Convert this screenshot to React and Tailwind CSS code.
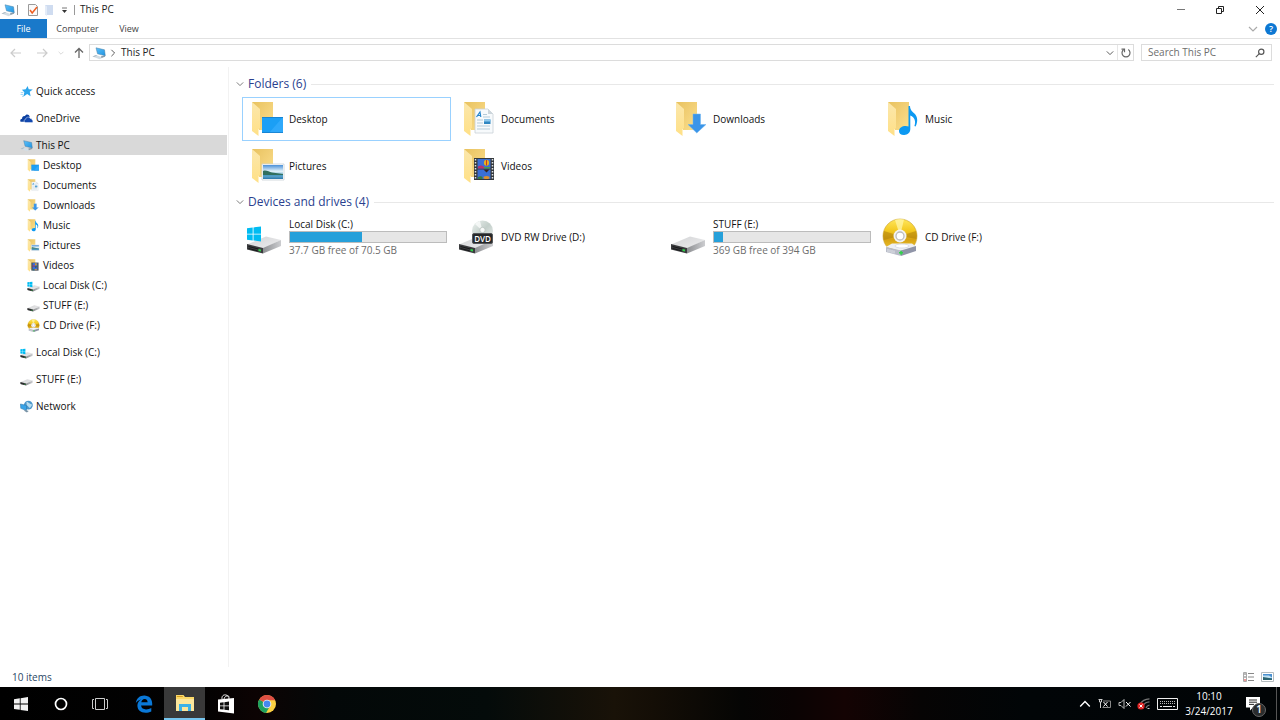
import { useId, useState } from 'react';

function PcIcon({ className }) {
  const id = useId();
  return (
    <svg viewBox="0 0 14 14" className={className} aria-hidden="true">
      <defs>
        <linearGradient id={id} x1="0" y1="0" x2="1" y2="1">
          <stop offset="0" stopColor="#5cc0fa" />
          <stop offset="1" stopColor="#1f93e0" />
        </linearGradient>
      </defs>
      <path d="M.5 10.5 4 9l7 2.6-3.400 1.700z" fill="#d3dde4" />
      <path d="M.5 10.500 4 9l1.200.5-3 1.500z" fill="#aebcc6" />
      <path d="M9 10.200 13 9.500v1.300L9.500 12z" fill="#8c9ca8" />
      <path d="M4 1.800 12.500 3.800l.8 6L5.500 7.800z" fill={`url(#${id})`} stroke="#4c7fa3" strokeWidth=".5" />
    </svg>
  );
}

function StarIcon({ className }) {
  return (
    <svg viewBox="0 0 14 14" className={className} aria-hidden="true">
      <path d="m8.200 1 1.200 3.700 4.400.1-3.300 2.600.9 4.800-3.700-2.500-4.200 2.900 1.200-4.700-2.700-2.900 4.100-.3z" fill="#2ba5ec" />
      <path d="M.8 8.200h2.800M.6 10.200h2.600M2.200 12.200h1.200" stroke="#7fc9f3" strokeWidth=".8" />
    </svg>
  );
}

function OneDriveIcon({ className }) {
  return (
    <svg viewBox="0 0 14 14" className={className} aria-hidden="true">
      <path d="M.3 9.600C.1 8.200 1.200 7.400 2.200 7.300c0-2.200 1.600-3.200 3-2.800C6.500 2 9.800 2.300 10.400 5.200L5.200 10.600H2C1 10.600.4 10.200.3 9.600z" fill="#0a3fa0" />
      <path d="M4.400 9.800c0-1.300.7-1.900 1.700-2 .1-2.300 3.700-3.400 4.900-.9 1.300-.2 1.900.6 1.900 1.500 1.500.3 1.400 3-.3 3H6c-1 0-1.600-.7-1.600-1.600z" fill="#1249b0" stroke="#fff" strokeWidth=".5" />
    </svg>
  );
}

function NetworkIcon({ className }) {
  return (
    <svg viewBox="0 0 14 14" className={className} aria-hidden="true">
      <circle cx="9" cy="5.500" r="4.800" fill="#4b97cc" />
      <path d="M7 1.800c2 .2 2 1.600 3.200 1.800.6 1 2 .6 2.800 1.400-.4 2-1.600 2-2.200 3.600C9 8.600 9.500 6.600 7.200 6z" fill="#b7dcef" />
      <path d="M.5 4.300 7 5.800v5.600L.8 9z" fill="#38a3e8" stroke="#2b75a8" strokeWidth=".6" />
      <path d="m4 11.200 2-.5 3.400 1.200-2 1.500z" fill="#7892a5" />
    </svg>
  );
}

// the open yellow folder every library icon sits on, plus its emblem
function FolderIcon({ kind, className }) {
  const id = useId();
  return (
    <svg viewBox="0 0 34 36" className={className} aria-hidden="true">
      <defs>
        <linearGradient id={`${id}b`} x1="0" y1="0" x2="1" y2="1">
          <stop offset="0" stopColor="#e8c25f" />
          <stop offset=".5" stopColor="#f2d077" />
          <stop offset="1" stopColor="#fae08d" />
        </linearGradient>
        <linearGradient id={`${id}f`} x1="0" y1="0" x2="0" y2="1">
          <stop offset="0" stopColor="#fbe7ac" />
          <stop offset="1" stopColor="#ffe086" />
        </linearGradient>
        <linearGradient id={`${id}s`} x1="0" y1="0" x2="0" y2="1">
          <stop offset="0" stopColor="#4a90d8" />
          <stop offset=".45" stopColor="#e4f3fa" />
          <stop offset=".65" stopColor="#8fc4de" />
          <stop offset="1" stopColor="#2878ac" />
        </linearGradient>
      </defs>
      <path d="M1 1h21v28H8z" fill={`url(#${id}b)`} />
      <path d="M1 1l8 7v19l-1.500 1v7L1 30z" fill={`url(#${id}f)`} />
      {kind === 'desktop' && (
        <g>
          <path d="M11 16h21v16H11z" fill="#1b9ff5" />
          <path d="M32 16v16H18z" fill="#2fa9fb" />
          <path d="M11 16.500h21M11 31.500h21" stroke="#1279c4" strokeWidth=".7" />
        </g>
      )}
      {kind === 'documents' && (
        <g>
          <path d="M12 8h13l5 5v19H12z" fill="#f7fafc" stroke="#c9d1d7" strokeWidth=".8" />
          <path d="M25 8v5h5z" fill="#cdd6dc" />
          <path d="m13.500 16 3.500-5 .8 5M15 14.500h3" fill="none" stroke="#2586ce" strokeWidth="1.200" />
          <path d="M20 13.500h4M20 16h7M14 19h6M14 22h6M14 25h13M14 28h13" stroke="#b5cbd9" strokeWidth="1" />
          <path d="M21 18.500h6.500v4.500H21z" fill="#2e86c1" />
          <path d="M21 18.500h6.500v2H21z" fill="#8cc8ee" />
        </g>
      )}
      {kind === 'downloads' && (
        <path d="M18 13h7.500v10.500h5.500L21.800 32 13 23.500h5z" fill="#3b95e8" stroke="#6fb4f0" strokeWidth=".5" />
      )}
      {kind === 'music' && (
        <path d="M21.500 5h1.500c.2 4 2.100 5.300 4.400 7.600 3.400 3.400 3.700 8 1.200 13l-1.200-.6c1.600-4.300.5-8.600-4.100-10.500v13.600c0 3.700-2.700 5.700-6.100 5.900-3.300.1-5.200-1.500-5.200-4 0-3 3-5 6.700-5 1.100 0 2 .2 2.800.5z" fill="#0c99f2" />
      )}
      {kind === 'pictures' && (
        <g>
          <path d="M11 16h22v16H11z" fill="#fff" stroke="#c9d1d6" strokeWidth=".8" />
          <path d="M12 17h20v14H12z" fill={`url(#${id}s)`} />
          <path d="M12 23c3-1.500 6 1 9 1.500l11 1.500v1H12z" fill="#32705f" />
          <path d="M12 27h20v1.500H12z" fill="#4c9cc4" />
        </g>
      )}
      {kind === 'videos' && (
        <g>
          <path d="M11 10h20v22H11z" fill="#34383c" />
          <path d="M14.500 11h13v9.500h-13zM14.500 21.500h13V31h-13z" fill="#3a6fd6" />
          <path d="M12.500 11v21M29.500 11v21" stroke="#dfe3e6" strokeWidth="1.500" strokeDasharray="1.500 1.500" />
          <ellipse cx="23.500" cy="14.800" rx="2.600" ry="3" fill="#e8b01e" />
          <path d="M23.500 12v5.500" stroke="#c53a28" />
          <path d="M15 18.500c2-1.500 4-1.500 6 .5v1.500h-6z" fill="#b7326e" />
          <path d="M21 19h6v1.500h-6z" fill="#4b9c4a" />
          <path d="m20.500 21.500 3 3 3-3z" fill="#35231f" />
          <ellipse cx="23.500" cy="29.500" rx="3" ry="1.500" fill="#e0902a" />
          <path d="M15 29c2-1 3.500-1 4.500 0v2H15z" fill="#357c45" />
        </g>
      )}
    </svg>
  );
}

function DriveIcon({ kind, className }) {
  const id = useId();
  return (
    <svg viewBox="0 0 36 36" className={className} aria-hidden="true">
      <defs>
        <linearGradient id={`${id}t`} x1="0" y1="0" x2="1" y2="1">
          <stop offset="0" stopColor="#d2d3d5" />
          <stop offset="1" stopColor="#eeeeef" />
        </linearGradient>
        <linearGradient id={`${id}r`} x1="0" y1="0" x2="1" y2="0">
          <stop offset="0" stopColor="#8d8f92" />
          <stop offset="1" stopColor="#cccdd0" />
        </linearGradient>
        <linearGradient id={`${id}d`} x1="0" y1="0" x2="1" y2="1">
          <stop offset="0" stopColor="#edf2f0" />
          <stop offset=".5" stopColor="#c3cfca" />
          <stop offset="1" stopColor="#eef1f0" />
        </linearGradient>
      </defs>
      <path d="M1 25.500 20 17.500l15 3.500-18 8.500z" fill={`url(#${id}t)`} />
      <path d="M17 29 35 21v6L17 34.500z" fill={`url(#${id}r)`} />
      <path d="M1 25l16 4v5.500L1 30.500z" fill="#3a3b3d" />
      <path d="M2.500 27.500l10 2.500M2.500 29.500l9 2.300" stroke="#17181a" />
      <path d="M12.500 30l2.500.6v2l-2.500-.6z" fill="#2fd24a" />
      {kind === 'system' && (
        <path d="M1 9.300 6.700 8.500v6.200H1zM7.500 8.400 15 7.500v7.200H7.500zM1 15.500h5.700v6.100L1 20.800zM7.500 15.500H15v7l-7.500-1z" fill="#00bcf2" />
      )}
      {kind === 'dvd' && (
        <g>
          <circle cx="24.500" cy="12" r="10.500" fill={`url(#${id}d)`} />
          <path d="M24.500 12 17 5a10.500 10.500 0 0 1 5-3z" fill="#fff" opacity=".7" />
          <circle cx="24.500" cy="11" r="2.700" fill="#f8faf9" stroke="#b5bfbb" strokeWidth=".8" />
          <rect x="14.500" y="14.500" width="20" height="10" rx="1.500" fill="#26282a" stroke="#54575a" />
          <text x="24.500" y="22.500" textAnchor="middle" fill="#fff" fontSize="8" fontWeight="600" fontFamily="Open Sans, sans-serif">DVD</text>
        </g>
      )}
    </svg>
  );
}

function CdIcon({ className }) {
  const id = useId();
  return (
    <svg viewBox="0 0 36 38" className={className} aria-hidden="true">
      <defs>
        <linearGradient id={id} x1="0" y1="0" x2="0" y2="1">
          <stop offset="0" stopColor="#ffe75c" />
          <stop offset=".35" stopColor="#f3c81f" />
          <stop offset=".6" stopColor="#d7a212" />
          <stop offset="1" stopColor="#f4cf3b" />
        </linearGradient>
      </defs>
      <circle cx="18" cy="18" r="17" fill={`url(#${id})`} stroke="#c9a233" strokeWidth=".6" />
      <path d="M18 18 13 2a17 17 0 0 1 9-.6z" fill="#fff6a8" opacity=".75" />
      <path d="M18 18 34 13a17 17 0 0 1 .5 8z" fill="#a97a07" opacity=".5" />
      <path d="M18 18 1.500 22a17 17 0 0 1 .5-9z" fill="#a97a07" opacity=".5" />
      <circle cx="18" cy="18" r="6.500" fill="#f3f3f3" />
      <circle cx="18" cy="18" r="4" fill="#fff" stroke="#bcbcbc" strokeWidth="1.300" />
      <path d="M4 29 10 25.500h20l4 3-14 5z" fill="#eef0f4" />
      <ellipse cx="20" cy="28" rx="7" ry="2" fill="#fff" stroke="#cfd3dc" strokeWidth=".7" />
      <path d="M4 29l15 3.500V38L4 34z" fill="#b7bbc7" />
      <path d="M19 32.500 34 28v5l-15 5z" fill="#9095a8" />
      <path d="M6 31v3M8 31.500v3M10 32v3M12 32.500v3" stroke="#eceef2" strokeWidth=".8" />
      <path d="M17 34.800h4M19 32.800v4" stroke="#2fd24a" strokeWidth="1.500" />
    </svg>
  );
}

function Chevron({ dir = 'down', className }) {
  const d = { down: 'm1 3 4 4 4-4', up: 'm1 7 4-4 4 4', right: 'm3 1 4 4-4 4' }[dir];
  return (
    <svg viewBox="0 0 10 10" className={className} fill="none" stroke="currentColor" strokeWidth="1.2" aria-hidden="true">
      <path d={d} />
    </svg>
  );
}

function ItemIcon({ icon, className }) {
  const [type, kind] = icon.split(':');
  if (type === 'folder') return <FolderIcon kind={kind} className={className} />;
  if (type === 'drive') return <DriveIcon kind={kind} className={className} />;
  if (type === 'cd') return <CdIcon className={className} />;
  if (type === 'star') return <StarIcon className={className} />;
  if (type === 'onedrive') return <OneDriveIcon className={className} />;
  if (type === 'network') return <NetworkIcon className={className} />;
  return <PcIcon className={className} />;
}

const folders = [
  { label: 'Desktop', icon: 'folder:desktop' },
  { label: 'Documents', icon: 'folder:documents' },
  { label: 'Downloads', icon: 'folder:downloads' },
  { label: 'Music', icon: 'folder:music' },
  { label: 'Pictures', icon: 'folder:pictures' },
  { label: 'Videos', icon: 'folder:videos' },
];

const drives = [
  { label: 'Local Disk (C:)', icon: 'drive:system', used: 46, free: '37.7 GB free of 70.5 GB' },
  { label: 'DVD RW Drive (D:)', icon: 'drive:dvd' },
  { label: 'STUFF (E:)', icon: 'drive:plain', used: 6, free: '369 GB free of 394 GB' },
  { label: 'CD Drive (F:)', icon: 'cd' },
];

const tree = [
  { label: 'Quick access', icon: 'star' },
  { label: 'OneDrive', icon: 'onedrive' },
  {
    label: 'This PC',
    icon: 'pc',
    children: [...folders, ...drives.filter((d) => d.icon !== 'drive:dvd')],
  },
  { label: 'Local Disk (C:)', icon: 'drive:system' },
  { label: 'STUFF (E:)', icon: 'drive:plain' },
  { label: 'Network', icon: 'network' },
];

function TitleBar() {
  return (
    <header className="flex h-[19px] items-center text-[#222]">
      <PcIcon className="ml-px size-[14px]" />
      <span className="ml-[2px] h-[10px] w-px bg-[#999]" />
      <button aria-label="Properties" className="ml-[9px]">
        <svg viewBox="0 0 12 12" className="size-3" fill="none">
          <path d="M1.5.5h7l2 2v9h-9z" fill="#fafafa" stroke="#9a9a9a" />
          <path d="m3 6 2.200 3L10 3" stroke="#ee5f22" strokeWidth="1.500" />
        </svg>
      </button>
      <button aria-label="New folder" className="ml-1">
        <svg viewBox="0 0 12 12" className="size-3">
          <path d="M2 1h8v10H2z" fill="#cfdcf0" />
          <path d="M2 1l2 1.500V12l-2-1.500z" fill="#e4ecf8" />
        </svg>
      </button>
      <button aria-label="Customize Quick Access Toolbar" className="ml-[5px]">
        <svg viewBox="0 0 8 8" className="size-2">
          <path d="M2 2h5" stroke="#777" />
          <path d="M2 4h5L4.500 7z" fill="#333" />
        </svg>
      </button>
      <span className="ml-[6px] h-[10px] w-px bg-[#999]" />
      <h1 className="ml-[5px] text-[10px]">This PC</h1>
      <div className="ml-auto flex h-full text-[#222]">
        <button aria-label="Minimize" className="flex w-[39px] items-center justify-center">
          <svg viewBox="0 0 10 10" className="size-[10px]"><path d="M1 4.500h8" stroke="#777" /></svg>
        </button>
        <button aria-label="Restore" className="flex w-[39px] items-center justify-center">
          <svg viewBox="0 0 10 10" className="size-[10px]" fill="none" stroke="currentColor">
            <path d="M1.500 3.500h5v5h-5zM3.500 3V1.500h5v5H7" />
          </svg>
        </button>
        <button aria-label="Close" className="flex w-[41px] items-center justify-center">
          <svg viewBox="0 0 10 10" className="size-[10px]" fill="none" stroke="currentColor"><path d="m1 1 8 8M9 1 1 9" /></svg>
        </button>
      </div>
    </header>
  );
}

function Ribbon() {
  return (
    <nav className="flex h-5 items-stretch border-b border-[#e2e2e2] text-[9px] text-[#444]">
      <button className="w-[47px] bg-[#1979ca] text-white">File</button>
      <button className="ml-[5px] w-[51px]">Computer</button>
      <button className="ml-2 w-[36px]">View</button>
      <div className="ml-auto flex items-center gap-[7px] pr-[3px]">
        <button aria-label="Expand the Ribbon"><Chevron className="size-[10px] text-[#aaa]" /></button>
        <button aria-label="Help" className="flex size-3 items-center justify-center rounded-full bg-[#0d78d3] text-[9px] font-semibold text-white">?</button>
      </div>
    </nav>
  );
}

function AddressBar() {
  return (
    <div className="flex items-center pt-[5px] pr-2 pb-[6px] pl-[10px]">
      <div className="flex w-[79px] items-center text-[#ccc]">
        <button aria-label="Back">
          <svg viewBox="0 0 12 12" className="size-3" fill="none" stroke="currentColor" strokeWidth="1.200"><path d="M11 6H1.500M5 2 1 6l4 4" /></svg>
        </button>
        <button aria-label="Forward" className="ml-[14px]">
          <svg viewBox="0 0 12 12" className="size-3" fill="none" stroke="currentColor" strokeWidth="1.200"><path d="M1 6h9.500M7 2l4 4-4 4" /></svg>
        </button>
        <button aria-label="Recent locations" className="ml-[10px]"><Chevron className="size-[6px]" /></button>
        <button aria-label="Up" className="ml-[9px] text-[#666]">
          <svg viewBox="0 0 12 12" className="size-3" fill="none" stroke="currentColor" strokeWidth="1.300"><path d="M6 11V1.500M2 5.500 6 1.500l4 4" /></svg>
        </button>
      </div>
      <div className="flex h-[17px] flex-1 items-center border border-[#dcdcdc] text-[10px] text-[#222]">
        <PcIcon className="ml-[2px] size-[14px]" />
        <Chevron dir="right" className="ml-[3px] size-2 text-[#555]" />
        <button className="ml-[3px] px-px">This PC</button>
        <button aria-label="Previous locations" className="ml-auto"><Chevron className="size-2 text-[#555]" /></button>
        <button aria-label="Refresh" className="ml-[3px] flex h-full w-4 items-center justify-center border-l border-[#e6e6e6]">
          <svg viewBox="0 0 12 12" className="size-3" fill="none" stroke="#666" strokeWidth="1.200">
            <path d="M8.300 2.600a4 4 0 1 1-4.600 0" />
            <path d="M1.500 2.200h3v3" />
          </svg>
        </button>
      </div>
      <label className="ml-[7px] flex h-[17px] w-[131px] items-center border border-[#dcdcdc] px-[6px]">
        <input
          type="search"
          aria-label="Search This PC"
          placeholder="Search This PC"
          className="min-w-0 flex-1 text-[10px] outline-none placeholder:text-[#6d6d6d]"
        />
        <svg viewBox="0 0 12 12" className="size-[10px]" fill="none" stroke="#555" strokeWidth="1.400">
          <circle cx="7.500" cy="4.500" r="3.200" />
          <path d="M5.200 6.800 1 11" />
        </svg>
      </label>
    </div>
  );
}

function TreeItem({ item, selected, onSelect, nested }) {
  return (
    <button
      onClick={onSelect}
      className={`flex h-5 w-full items-center gap-[3px] text-left ${nested ? 'pl-[27px]' : 'pl-5'} ${selected ? 'bg-[#d9d9d9]' : ''}`}
    >
      <ItemIcon icon={item.icon} className="size-[13px]" />
      {item.label}
    </button>
  );
}

function Sidebar() {
  const [selected, setSelected] = useState('This PC');
  return (
    <aside className="w-[229px] shrink-0 border-r border-[#f2f2f2] pt-[14px] pr-px text-[10px] text-[#111]">
      <ul className="flex flex-col gap-[7px]">
        {tree.map((item) => (
          <li key={item.label}>
            <TreeItem item={item} selected={selected === item.label} onSelect={() => setSelected(item.label)} />
            {item.children && (
              <ul>
                {item.children.map((child) => (
                  <li key={child.label}>
                    <TreeItem item={child} nested onSelect={() => setSelected(item.label)} />
                  </li>
                ))}
              </ul>
            )}
          </li>
        ))}
      </ul>
    </aside>
  );
}

function Tile({ item, focused }) {
  const isFolder = item.icon.startsWith('folder');
  return (
    <button
      className={`flex h-11 w-[209px] items-center border text-left text-[10px] text-[#111] ${
        focused ? 'border-[#99d1ff]' : 'border-transparent'
      }`}
    >
      <span className={`w-[46px] shrink-0 ${isFolder ? 'pl-2' : 'pl-[3px]'}`}>
        <ItemIcon icon={item.icon} className={isFolder ? 'h-9 w-[34px]' : 'h-[38px] w-9'} />
      </span>
      <span className="flex-1 pr-[3px]">
        <span className="block leading-[14px]">{item.label}</span>
        {item.free && (
          <>
            <span className="block h-3 border border-[#bcbcbc] bg-[#e6e6e6]">
              <span className="block h-full bg-[#26a0da]" style={{ width: `${item.used}%` }} />
            </span>
            <span className="block leading-[14px] text-[#6d6d6d]">{item.free}</span>
          </>
        )}
      </span>
    </button>
  );
}

function Section({ title, items, focused }) {
  return (
    <section>
      <h2 className="flex h-5 items-center text-[12px] text-[#2a3f8f]">
        <Chevron className="mr-1 size-2 text-[#777]" />
        {title}
        <span className="ml-[5px] h-px flex-1 bg-[#e8e8e8]" />
      </h2>
      <div className="mt-[3px] ml-[6px] flex flex-wrap gap-[3px]">
        {items.map((item) => (
          <Tile key={item.label} item={item} focused={focused === item.label} />
        ))}
      </div>
    </section>
  );
}

function StatusBar() {
  return (
    <footer className="flex h-5 items-center pr-[6px] pl-3 text-[10px] text-[#2b4766]">
      10 items
      <div className="ml-auto flex gap-[6px]">
        <button aria-label="Details view">
          <svg viewBox="0 0 13 12" className="h-3 w-[13px]" fill="none">
            <path d="M1.500 1.500h3v9h-3z" stroke="#aaa" />
            <path d="M2 3h2M2 6h2" stroke="#777" />
            <path d="M2 9h2" stroke="#d33" />
            <path d="M6 2.500h6M6 6h6M6 9.500h6" stroke="#888" />
          </svg>
        </button>
        <button aria-label="Large icons view">
          <svg viewBox="0 0 13 12" className="h-3 w-[13px]">
            <path d="M.5 1.500h12v9H.5z" fill="#fff" stroke="#b4bcc0" />
            <path d="M2 3h9v6H2z" fill="#4a90d0" />
            <path d="M2 4.500h6l3 2V7H2z" fill="#bfe0f2" />
            <path d="M2 6l9 1.500V9H2z" fill="#2b6470" />
          </svg>
        </button>
      </div>
    </footer>
  );
}

function Taskbar() {
  const app = 'flex w-[41px] items-center justify-center';
  return (
    <footer className="flex h-[33px] bg-[linear-gradient(90deg,#000_0%,#030202_16%,#0c0303_20%,#030808_26%,#040b0a_38%,#191208_48%,#140e06_51%,#050504_58%,#0a0303_62%,#140303_66%,#060404_72%,#010507_80%,#010406_100%)] text-white">
      <button aria-label="Start" className={app}>
        <svg viewBox="0 0 14 14" className="size-[14px]" fill="#f2f2f2">
          <path d="M0 2.200 5.800 1.300v5.300H0zM6.600 1.200 14 0v6.600H6.600zM0 7.400h5.800v5.300L0 11.900zM6.600 7.400H14V14l-7.400-1.100z" />
        </svg>
      </button>
      <button aria-label="Cortana" className="flex w-[39px] items-center justify-center">
        <svg viewBox="0 0 14 14" className="size-[14px]" fill="none"><circle cx="7" cy="7" r="5.500" stroke="#fff" strokeWidth="1.700" /></svg>
      </button>
      <button aria-label="Task View" className="flex w-[40px] items-center justify-center">
        <svg viewBox="0 0 16 14" className="h-[14px] w-4" fill="none" stroke="#ccc">
          <path d="M3.500 1.500h9v11h-9zM2 2.500H.5v9H2M14 2.500h1.500v9H14" />
        </svg>
      </button>
      <button aria-label="Microsoft Edge" className="ml-[3px] flex w-[41px] items-center justify-center">
        <svg viewBox="0 0 18 18" className="size-[18px]">
          <path d="M.8 8C1.600 3.300 4.800.6 9.200.6c5 0 8 3.600 8 8v2H6.100c.2 2.700 2.300 3.800 4.900 3.800 2 0 3.800-.5 5.300-1.400v3.500c-1.700.9-3.700 1.300-5.800 1.300-5 0-8.100-2.900-8.100-7.200 0-2.700 1.400-4.900 3.900-6.100C4 4.900 2.100 6 .8 8zM6.300 7.300h6.300c0-2-1-3.300-2.900-3.300-1.900 0-3.100 1.300-3.400 3.300z" fill="#0a78d7" />
        </svg>
      </button>
      <button aria-label="File Explorer" className="flex w-[41px] items-center justify-center border-b-2 border-[#76c5ee] bg-[#393939] pt-px">
        <svg viewBox="0 0 18 17" className="h-[17px] w-[18px]">
          <path d="M0 0h7.500l1.500 2h9v14H0z" fill="#fbd968" />
          <path d="M0 4h18v12H0z" fill="#fde79c" />
          <path d="M.8 1h6v1h-6z" fill="#d49c22" />
          <path d="M3 16V9h12v7h-3v-4H6v4z" fill="#3cb2e8" />
        </svg>
      </button>
      <button aria-label="Store" className={app}>
        <svg viewBox="0 0 18 20" className="h-5 w-[18px]">
          <path d="M5 5C4.500 1.500 7 .5 9 1c2 .4 3 2 3 4M7 5c.5-3 4-4 5.500-2" fill="none" stroke="#eee" />
          <path d="M1 5.500 17 4v15.500L1 17.500z" fill="#fff" />
          <path d="m3 8.800 3.600-.5v3.200H3zM7.400 8.200l4.600-.6v3.900H7.400zM3 12.300h3.600v3.300L3 15.200zM7.400 12.300H12v3.900l-4.600-.5z" fill="#111" />
        </svg>
      </button>
      <button aria-label="Google Chrome" className={app}>
        <svg viewBox="0 0 20 20" className="size-5">
          <circle cx="10" cy="10" r="9" fill="#fbd042" />
          <path d="M10 10 2.200 5.500A9 9 0 0 0 9 19l4-7z" fill="#1da15f" />
          <path d="M10 10 2.200 5.500a9 9 0 0 1 16 .8H10z" fill="#df4f43" />
          <circle cx="10" cy="10" r="4.300" fill="#f5f5f5" />
          <circle cx="10" cy="10" r="3.400" fill="#4688f1" />
        </svg>
      </button>
      <div className="ml-auto flex items-center">
        <button aria-label="Show hidden icons"><Chevron dir="up" className="size-3" /></button>
        <button aria-label="Power" className="ml-[7px]">
          <svg viewBox="0 0 14 12" className="h-3 w-[14px]" fill="none" stroke="#ccc">
            <path d="M.5 1.500h4M1.500 1.500v2.500h2V1.500M2.500 4v6" />
            <path d="M5 3h7.500v6.500H4.500" stroke="#888" />
            <path d="m5.500 4 4 4.500M9.500 4l-4 4.500" stroke="#fff" />
          </svg>
        </button>
        <button aria-label="Volume muted" className="ml-[6px]">
          <svg viewBox="0 0 14 12" className="h-3 w-[14px]" fill="none" stroke="#bbb">
            <path d="M1 4.500h2l3-3v9l-3-3H1z" />
            <path d="m8 4 4.500 4.500M12.500 4 8 8.500" stroke="#fff" />
          </svg>
        </button>
        <button aria-label="Network not connected" className="ml-[5px]">
          <svg viewBox="0 0 14 12" className="h-3 w-[14px]" fill="none">
            <path d="M3 6C5 2.500 8.500 1 12.500.8M6 8c1-2.500 3.500-4 6.500-4.200M9 10c.5-1.500 1.500-2.500 3.500-3" stroke="#777" strokeWidth="1.200" />
            <path d="M10.500 10.500h2" stroke="#ccc" />
            <circle cx="4" cy="8" r="3.600" fill="#e02424" />
            <path d="m2.500 6.500 3 3M5.500 6.500l-3 3" stroke="#fff" />
          </svg>
        </button>
        <button aria-label="Touch keyboard" className="ml-[6px]">
          <svg viewBox="0 0 21 12" className="h-3 w-[21px]" fill="none" stroke="#eee">
            <path d="M.5.5h20v11H.5z" />
            <path d="M3 3.500h15M3 5.500h15" stroke="#bbb" strokeDasharray="1 1" />
            <path d="M3 8.500h2M6 8.500h9M16 8.500h2" />
          </svg>
        </button>
        <div className="ml-[6px] w-[50px] text-center text-[10px] leading-[15px]">
          <div>10:10</div>
          <div>3/24/2017</div>
        </div>
        <button aria-label="Notifications" className="relative ml-3">
          <svg viewBox="0 0 14 14" className="size-[14px]">
            <path d="M0 0h14v10.500H7L4 13.500v-3H0z" fill="#fff" />
            <path d="M3 3h8M3 5.200h8M3 7.400h5" stroke="#111" strokeWidth=".9" />
          </svg>
          <span className="absolute top-[6px] left-[6px] flex size-[14px] items-center justify-center rounded-full border border-[#666] bg-[#2a2c2d] text-[10px] font-semibold">1</span>
        </button>
        <button aria-label="Show desktop" className="ml-4 h-full w-1 border-l border-[#555]" />
      </div>
    </footer>
  );
}

export default function App() {
  return (
    <div className="flex h-screen flex-col overflow-hidden bg-white font-['Open_Sans',sans-serif]">
      <TitleBar />
      <Ribbon />
      <AddressBar />
      <div className="flex min-h-0 flex-1">
        <Sidebar />
        <main className="flex-1 pt-[7px] pr-[6px] pl-[7px]">
          <Section title="Folders (6)" items={folders} focused="Desktop" />
          <div className="mt-1">
            <Section title="Devices and drives (4)" items={drives} />
          </div>
        </main>
      </div>
      <StatusBar />
      <Taskbar />
    </div>
  );
}
